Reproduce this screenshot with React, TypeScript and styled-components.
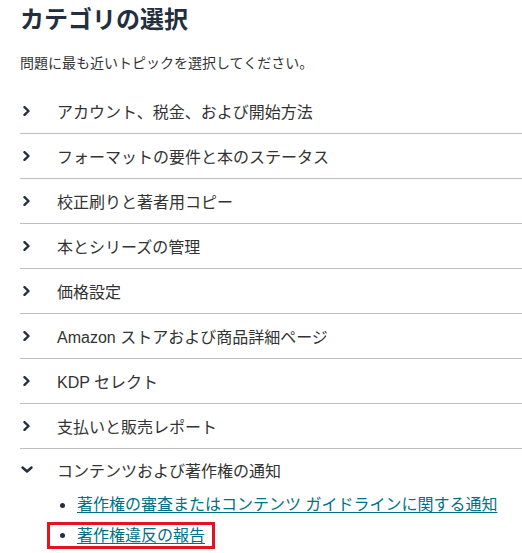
import React from "react";
import styled, { createGlobalStyle } from "styled-components";

const Global = createGlobalStyle`
  html, body { margin: 0; padding: 0; background: #fff; }
  body {
    font-family: "Liberation Sans", Arial, "Noto Sans CJK JP", sans-serif;
    color: #333;
    overflow: hidden;
  }
`;

const Page = styled.div`
  padding: 0 0 0 20px;
  width: 502px;
`;

const Title = styled.h1`
  margin: 0;
  font-size: 24px;
  line-height: 40px;
  font-weight: 700;
  color: #232f3e;
`;

const Subtitle = styled.p`
  margin: 13px 0 0;
  font-size: 14px;
  line-height: 20px;
  color: #333;
`;

const List = styled.ul`
  list-style: none;
  margin: 16px 0 0;
  padding: 0;
`;

const Row = styled.li<{ $last?: boolean }>`
  border-bottom: ${(p) => (p.$last ? "none" : "1px solid #bbbfbf")};
`;

const RowHeader = styled.div<{ $open?: boolean }>`
  display: flex;
  align-items: center;
  height: ${(p) => (p.$open ? "41px" : "44px")};
  font-size: 16px;
  color: #333;
`;

const Chevron = styled.span<{ $down?: boolean }>`
  width: 37px;
  display: flex;
  align-items: center;
  padding-left: ${(p) => (p.$down ? "1px" : "3px")};
  box-sizing: border-box;
`;

const SubList = styled.ul`
  list-style: none;
  margin: 0;
  padding: 0;
`;

const SubItem = styled.li`
  display: flex;
  align-items: center;
  height: 30px;
  padding-left: 40px;
`;

const Highlight = styled.li`
  display: inline-flex;
  align-items: center;
  margin: 2px 0 0 27px;
  height: 21px;
  padding: 0 7px 0 10px;
  border: 3px solid #e3141f;
`;

const Bullet = styled.span`
  width: 5px;
  height: 5px;
  border-radius: 50%;
  background: #232f3e;
  margin-right: 12px;
  flex: none;
`;

const Link = styled.a`
  font-size: 16px;
  line-height: 20px;
  color: #007185;
  text-decoration: underline;
  text-underline-offset: 2px;
`;

const RightIcon = () => (
  <svg width="8" height="10" viewBox="0 0 8 10">
    <path d="M1.5 1.2 L5.5 5 L1.5 8.8" fill="none" stroke="#232f3e" strokeWidth="2.4" strokeLinecap="round" strokeLinejoin="round" />
  </svg>
);

const DownIcon = () => (
  <svg width="12" height="8" viewBox="0 0 12 8">
    <path d="M1.5 1.5 L6 5.5 L10.5 1.5" fill="none" stroke="#232f3e" strokeWidth="2.4" strokeLinecap="round" strokeLinejoin="round" />
  </svg>
);

const categories = [
  "アカウント、税金、および開始方法",
  "フォーマットの要件と本のステータス",
  "校正刷りと著者用コピー",
  "本とシリーズの管理",
  "価格設定",
  "Amazon ストアおよび商品詳細ページ",
  "KDP セレクト",
  "支払いと販売レポート",
];

export default function App() {
  return (
    <>
      <Global />
      <Page>
        <Title>カテゴリの選択</Title>
        <Subtitle>問題に最も近いトピックを選択してください。</Subtitle>
        <List>
          {categories.map((c) => (
            <Row key={c}>
              <RowHeader>
                <Chevron>
                  <RightIcon />
                </Chevron>
                {c}
              </RowHeader>
            </Row>
          ))}
          <Row $last>
            <RowHeader $open>
              <Chevron $down>
                <DownIcon />
              </Chevron>
              コンテンツおよび著作権の通知
            </RowHeader>
            <SubList>
              <SubItem>
                <Bullet />
                <Link href="#">著作権の審査またはコンテンツ ガイドラインに関する通知</Link>
              </SubItem>
              <Highlight>
                <Bullet />
                <Link href="#">著作権違反の報告</Link>
              </Highlight>
            </SubList>
          </Row>
        </List>
      </Page>
    </>
  );
}
